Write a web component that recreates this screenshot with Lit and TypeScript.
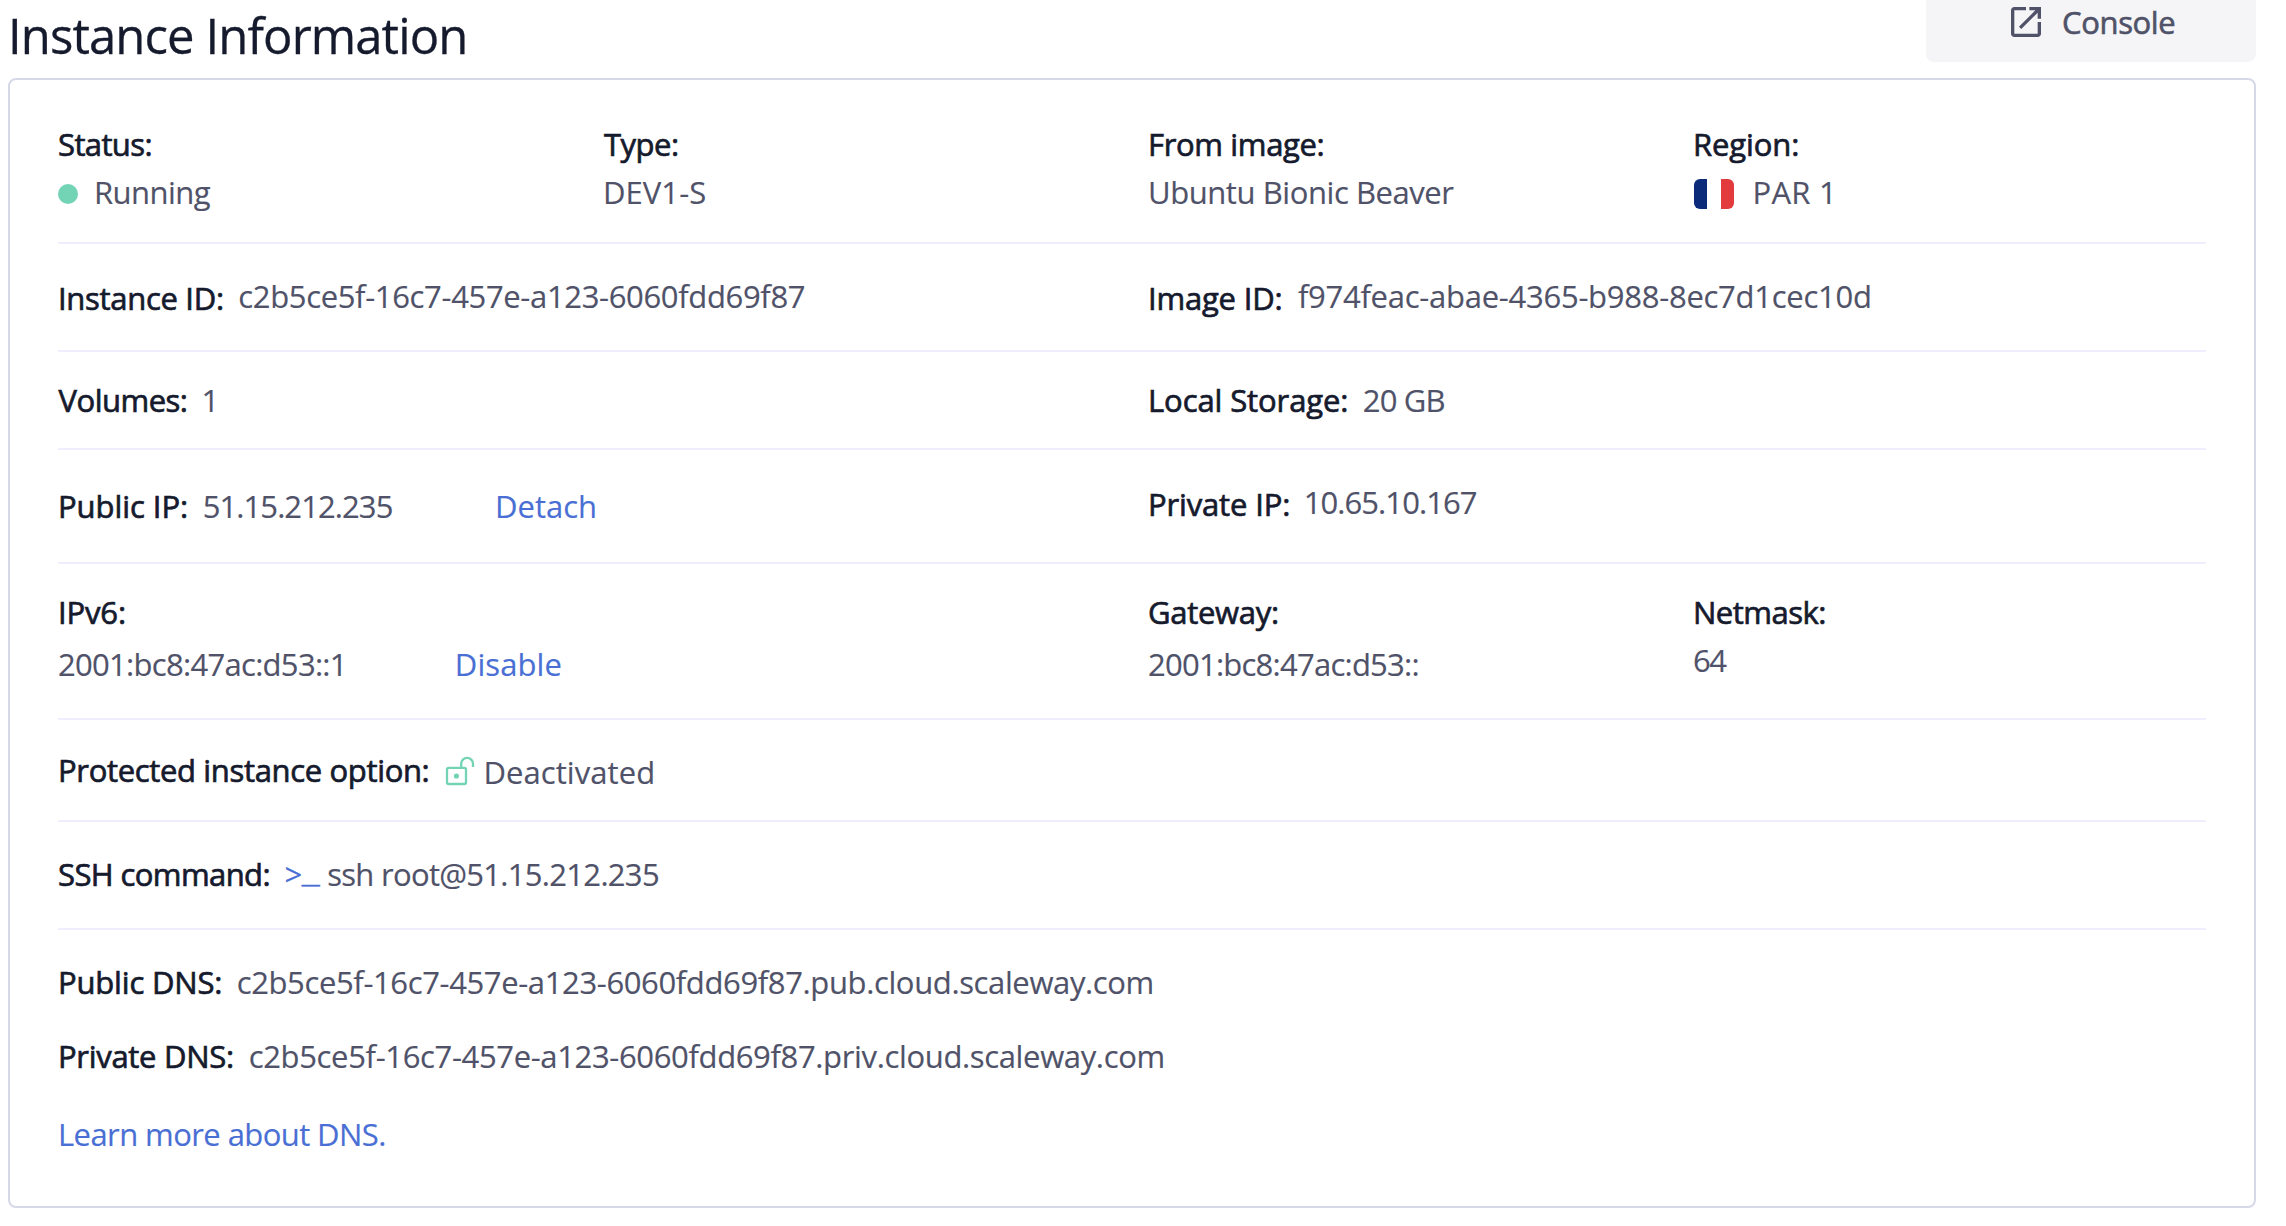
import { LitElement, html, css, svg } from "lit";
import { customElement } from "lit/decorators.js";

/** One run of text: content, tracking in px, and the space before it in px. */
const run = (kind: string, text: string, tracking = 0, before = 0) =>
  html`<span class="t ${kind}" style="letter-spacing:${tracking}px;margin-left:${before}px">${text}</span>`;

const label = (text: string, tracking = 0, before = 0) => run("label", text, tracking, before);
const value = (text: string, tracking = 0, before = 0) => run("value", text, tracking, before);
const link = (text: string, tracking = 0, before = 0) => run("link", text, tracking, before);

const INSTANCE_ID = "c2b5ce5f-16c7-457e-a123-6060fdd69f87";

const openIcon = svg`<path fill="currentColor" d="M19 19H5V5h7V3H5c-1.11 0-2 .9-2 2v14c0 1.1.89 2 2 2h14c1.1 0 2-.9 2-2v-7h-2v7zM14 3v2h3.59l-9.83 9.83 1.41 1.41L19 6.41V10h2V3h-7z"/>`;

const unlockIcon = svg`<g fill="none" stroke="currentColor" stroke-width="2.3">
  <rect x="2" y="11.8" width="19" height="16.2" rx="1.6"/>
  <path d="M16.2 11.4V7.8a5.9 5.9 0 0 1 11.8 0V11"/></g>
  <circle cx="11.4" cy="20" r="2.6" fill="currentColor"/>`;

@customElement("app-root")
export class AppRoot extends LitElement {
  static styles = css`
    :host {
      display: block;
      box-sizing: border-box;
      height: 1226px;
      padding: 0 30px 0 8px;
      background: #fff;
      overflow: hidden;
      font: 400 31px/32px "Open Sans", "Noto Sans", sans-serif;
      color: #4f5268;
    }
    .head {
      display: flex;
      justify-content: space-between;
      align-items: flex-start;
      height: 78px;
    }
    h1 {
      margin: 11px 0 0 0;
      font-size: 49px;
      line-height: 48px;
      font-weight: 400;
      letter-spacing: -0.89px;
      color: #151a2d;
      -webkit-text-stroke: 0.3px #151a2d;
      white-space: nowrap;
    }
    .console {
      display: flex;
      box-sizing: border-box;
      width: 330px;
      height: 62px;
      padding: 6px 0 0 85px;
      border: 0;
      border-radius: 0 0 8px 8px;
      background: #f5f5f7;
      font: inherit;
      color: #4f5268;
      letter-spacing: -0.35px;
      -webkit-text-stroke: 0.6px #4f5268;
      text-align: left;
    }
    .console svg {
      width: 30px;
      height: 30px;
      margin: 1px 21px 0 0;
      -webkit-text-stroke: 0;
    }
    .card {
      border: 2px solid #d5d9e8;
      border-radius: 8px;
      padding: 0 48px;
    }
    .row {
      display: grid;
      grid-template-columns: repeat(4, 1fr);
      column-gap: 32px;
      align-items: start;
      border-bottom: 2px solid #eeeeff;
    }
    .two { grid-template-columns: repeat(2, 1fr); }
    .one { grid-template-columns: 1fr; }
    .general { padding: 48px 0 34px; }
    .ids { padding: 36px 0; }
    .storage { padding: 32px 0; }
    .ips { padding: 36px 0 40px; }
    .ipv6 { padding: 32px 0 38px; }
    .protect { padding: 34px 0 32px; }
    .ssh { padding: 36px 0 38px; }
    .dns { padding: 36px 0 56px; border-bottom: 0; }
    .line { display: flex; align-items: flex-start; }
    .stack { display: flex; flex-direction: column; gap: 16px; }
    .loose { gap: 20px; }
    .span { grid-column: span 2; }
    .lower { margin-top: 4px; }
    .drop .label, .late .value { margin-top: 2px; }
    .second { margin-top: 42px; }
    .third { margin-top: 46px; }
    .t { white-space: nowrap; }
    .label { color: #151a2d; -webkit-text-stroke: 0.7px #151a2d; }
    .value { color: #4f5268; -webkit-text-stroke: 0.15px #4f5268; }
    .link { color: #4a6fd4; -webkit-text-stroke: 0.15px #4a6fd4; }
    .dot {
      width: 20px;
      height: 20px;
      margin-top: 8px;
      border-radius: 50%;
      background: #73d3b5;
    }
    .flag {
      width: 40px;
      height: 30px;
      margin: 3px 0 -1px 1px;
      border-radius: 6px;
      background: linear-gradient(90deg, #0b2a7a 33.3%, #fff 33.3% 66.6%, #e23a3d 66.6%);
    }
    .lock {
      width: 30px;
      height: 30px;
      margin: 2px 0 0 16px;
      color: #73d3b5;
    }
    .prompt {
      display: flex;
      margin-left: 14.5px;
      color: #4a6fd4;
      -webkit-text-stroke: 0.15px #4a6fd4;
    }
    .bar {
      height: 28px;
      margin: 0.5px 0 0 -0.5px;
      font: 30px/32px "Liberation Mono", monospace;
      -webkit-text-stroke: 0.5px #4a6fd4;
    }
  `;

  render() {
    return html`
      <header class="head">
        <h1>Instance Information</h1>
        <button class="console">
          <svg viewBox="3 3 18 18">${openIcon}</svg>Console
        </button>
      </header>
      <main class="card">
        <section class="row general">
          <div class="stack">
            ${label("Status:", -0.62)}
            <div class="line"><i class="dot"></i>${value("Running", -0.55, 16)}</div>
          </div>
          <div class="stack">${label("Type:", -0.5, 1)}${value("DEV1-S", 0.05)}</div>
          <div class="stack">${label("From image:", -0.35)}${value("Ubuntu Bionic Beaver", -0.43, 0)}</div>
          <div class="stack">
            ${label("Region:", -0.1)}
            <div class="line"><i class="flag"></i>${value("PAR 1", 0.25, 18.5)}</div>
          </div>
        </section>
        <section class="row two ids">
          <div class="line drop">${label("Instance ID:", -0.3)}${value(INSTANCE_ID, -0.34, 14.5)}</div>
          <div class="line drop">${label("Image ID:", -0.2)}${value("f974feac-abae-4365-b988-8ec7d1cec10d", -0.26, 15.5)}</div>
        </section>
        <section class="row two storage">
          <div class="line">${label("Volumes:", -0.5, 0.5)}${value("1", 0, 14)}</div>
          <div class="line">${label("Local Storage:", -0.1)}${value("20 GB", -0.85, 14.5)}</div>
        </section>
        <section class="row two ips">
          <div class="line lower">
            ${label("Public IP:", -0.05)}${value("51.15.212.235", -0.91, 14.5)}${link("Detach", 0, 102.5)}
          </div>
          <div class="line drop">${label("Private IP:", -0.15)}${value("10.65.10.167", -0.92, 13.5)}</div>
        </section>
        <section class="row ipv6">
          <div class="stack loose span">
            ${label("IPv6:", -0.15)}
            <div class="line">${value("2001:bc8:47ac:d53::1", -0.7, 0)}${link("Disable", 0.1, 108)}</div>
          </div>
          <div class="stack loose">${label("Gateway:", -0.29, 0)}${value("2001:bc8:47ac:d53::", -0.75, 0)}</div>
          <div class="stack">${label("Netmask:", -0.5)}${value("64", -1.6, 0)}</div>
        </section>
        <section class="row one protect">
          <div class="line late">
            ${label("Protected instance option:", -0.34)}<svg class="lock" viewBox="0 0 30 30">${unlockIcon}</svg>${value("Deactivated", 0.08, 8)}
          </div>
        </section>
        <section class="row one ssh">
          <div class="line">
            ${label("SSH command:", -0.6)}<span class="prompt">&gt;<span class="bar">_</span></span>${value("ssh root@51.15.212.235", -0.7, 7.5)}
          </div>
        </section>
        <section class="row one dns">
          <div class="line">${label("Public DNS:", -0.18)}${value(INSTANCE_ID + ".pub.cloud.scaleway.com", -0.37, 14.5)}</div>
          <div class="line second">${label("Private DNS:", -0.3)}${value(INSTANCE_ID + ".priv.cloud.scaleway.com", -0.35, 15)}</div>
          <div class="line third">${link("Learn more about DNS.", -0.58)}</div>
        </section>
      </main>
    `;
  }
}
